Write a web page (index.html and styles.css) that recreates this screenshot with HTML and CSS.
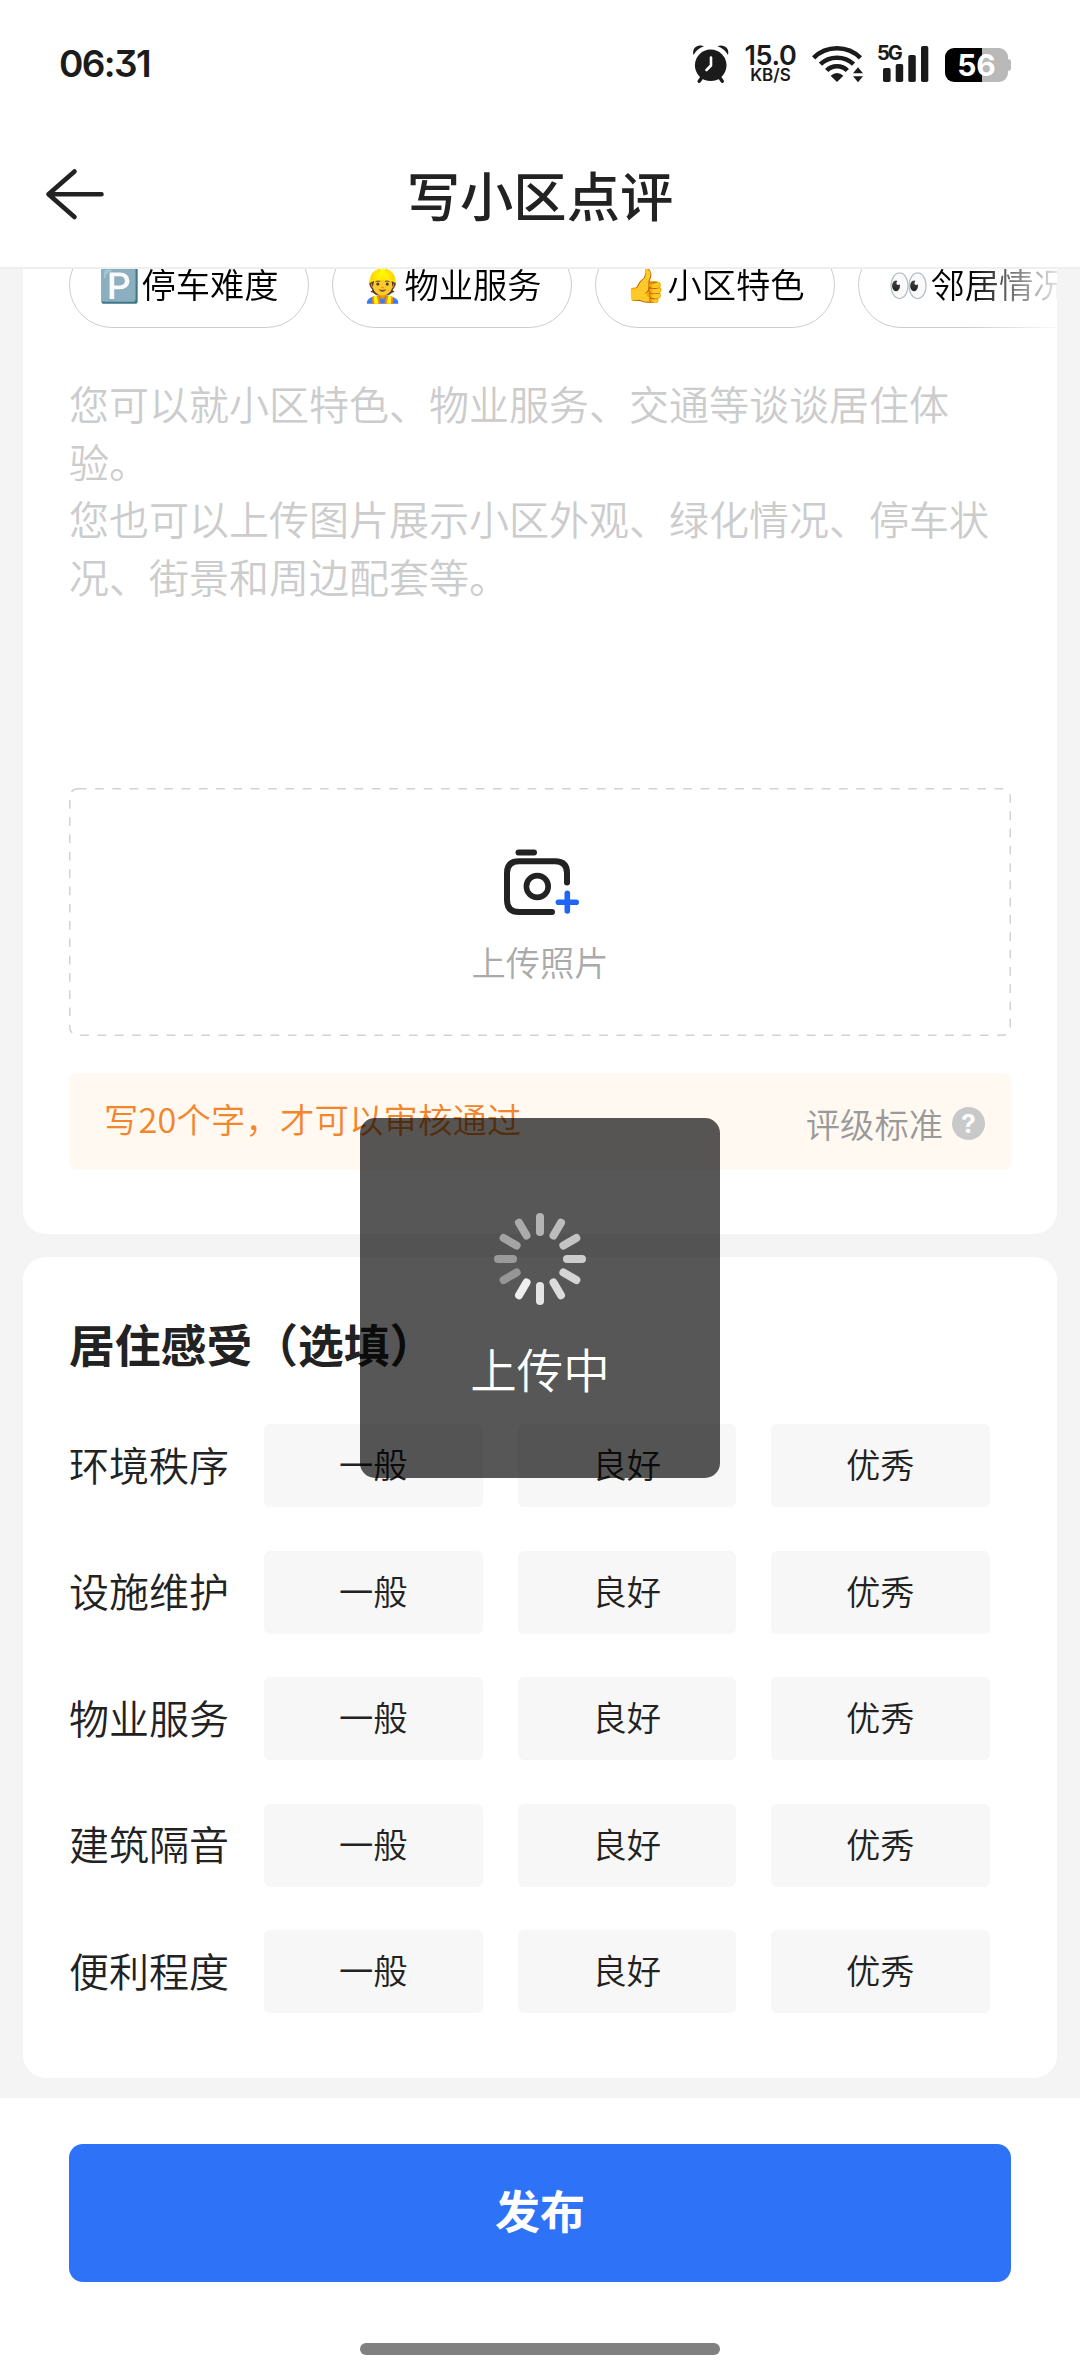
FILE: index.html
```html
<!DOCTYPE html>
<html lang="zh-CN">
<head>
<meta charset="utf-8">
<title>写小区点评</title>
<link rel="stylesheet" href="styles.css">
</head>
<body>
<div class="screen">
  <header class="header">
    <div class="status">
      <span class="clock">06:31</span>
      <div class="status-icons">
        <svg class="alarm" width="38" height="40" viewBox="0 0 38 40">
          <g fill="#1b1b1b"><circle cx="18.7" cy="21.3" r="15.8"/>
          <path d="M1.5 11C-.5 4 6 0 12 2.200Q4.500 5 1.500 11Z"/><path d="M36 11C38 4 31.500 0 25.500 2.200Q33 5 36 11Z"/></g>
          <path d="M9.500 34l-2.300 3.300M28 34l2.300 3.300" stroke="#1b1b1b" stroke-width="3.400" stroke-linecap="round"/>
          <path d="M19 13.500v8l-4.500 4.500" fill="none" stroke="#fff" stroke-width="2.600" stroke-linecap="round" stroke-linejoin="round"/>
        </svg>
        <div class="speed"><b>15.0</b><span>KB/S</span></div>
        <svg class="wifi" width="52" height="40" viewBox="0 0 52 40">
          <g fill="none" stroke="#1b1b1b" stroke-width="4.600">
            <path d="M1.600 13.800C14.500 1 35.500 1 48.400 13.800"/>
            <path d="M8.400 20.200C17.500 11.600 32.500 11.600 41.600 20.200"/>
            <path d="M14.700 26.500C20 20.800 30 20.800 35.300 26.500"/>
          </g>
          <path d="M25 38l-6.400-6.200q6.400-5.400 12.800 0z" fill="#1b1b1b"/>
          <path d="M46 23.200l5 6h-10zM46 38.200l5-6h-10z" fill="#1b1b1b"/>
        </svg>
        <div class="signal">
          <span>5G</span>
          <svg width="54" height="40" viewBox="0 0 54 40" fill="#1b1b1b">
            <rect x="6" y="24" width="7.600" height="14" rx="1.800"/><rect x="18.700" y="20" width="7.500" height="18" rx="1.800"/><rect x="31.300" y="11" width="7.500" height="27" rx="1.800"/><rect x="44" y="2" width="7.300" height="36" rx="1.800"/>
          </svg>
        </div>
        <div class="battery"><span>56</span></div>
      </div>
    </div>
    <div class="nav">
      <svg class="back" width="64" height="54" viewBox="0 0 64 54" fill="none" stroke="#222" stroke-width="4.600" stroke-linecap="round" stroke-linejoin="round"><path d="M32.500 4.500L6.500 27.200L32.500 50M6.500 27.200H59.500"/></svg>
      <h1>写小区点评</h1>
    </div>
  </header>

  <main class="content">
    <section class="card review">
      <div class="chips">
        <div class="chip"><i>🅿️</i>停车难度</div>
        <div class="chip"><i>👷</i>物业服务</div>
        <div class="chip"><i>👍</i>小区特色</div>
        <div class="chip"><i>👀</i>邻居情况</div>
      </div>
      <div class="editor">您可以就小区特色、物业服务、交通等谈谈居住体验。<br>您也可以上传图片展示小区外观、绿化情况、停车状况、街景和周边配套等。</div>
      <div class="upload">
        <svg class="dashes" width="942" height="248"><rect x=".75" y=".75" width="940.500" height="246.500" rx="8" fill="none" stroke="#d2d2d2" stroke-width="1.500" stroke-dasharray="8.700 8.600"/></svg>
        <svg width="76" height="66" viewBox="0 0 76 66" fill="none" stroke="#222" stroke-width="6" stroke-linecap="round">
          <path d="M14.500 3.500H30M63 33.500V24Q63 12.200 51 12.200H15Q3 12.200 3 24V51Q3 63 15 63H48"/>
          <circle cx="33.300" cy="37.500" r="10.900" stroke-width="5.600"/>
          <path d="M63.300 44.300V62M54.400 53.200H72.200" stroke="#1f66f5" stroke-width="5.600"/>
        </svg>
        <span>上传照片</span>
      </div>
      <div class="notice">
        <span class="tip">写20个字，才可以审核通过</span>
        <span class="standard">评级标准</span>
        <span class="help">?</span>
      </div>
    </section>

    <section class="card feeling">
      <h2>居住感受（选填）</h2>
      <div class="row"><label>环境秩序</label><button>一般</button><button>良好</button><button>优秀</button></div>
      <div class="row"><label>设施维护</label><button>一般</button><button>良好</button><button>优秀</button></div>
      <div class="row"><label>物业服务</label><button>一般</button><button>良好</button><button>优秀</button></div>
      <div class="row"><label>建筑隔音</label><button>一般</button><button>良好</button><button>优秀</button></div>
      <div class="row"><label>便利程度</label><button>一般</button><button>良好</button><button>优秀</button></div>
    </section>
  </main>

  <footer class="footer">
    <button class="publish">发布</button>
    <div class="home"></div>
  </footer>

  <div class="toast">
    <svg width="96" height="96" viewBox="-48 -48 96 96" stroke-width="8" stroke-linecap="round">
      <path d="M0-42V-27" stroke="#b4b4b4"/>
      <path d="M0-42V-27" stroke="#bcbcbc" transform="rotate(30)"/>
      <path d="M0-42V-27" stroke="#c4c4c4" transform="rotate(60)"/>
      <path d="M0-42V-27" stroke="#cdcdcd" transform="rotate(90)"/>
      <path d="M0-42V-27" stroke="#d5d5d5" transform="rotate(120)"/>
      <path d="M0-42V-27" stroke="#dcdcdc" transform="rotate(150)"/>
      <path d="M0-42V-27" stroke="#e4e4e4" transform="rotate(180)"/>
      <path d="M0-42V-27" stroke="#eeeeee" transform="rotate(210)"/>
      <path d="M0-42V-27" stroke="#969696" transform="rotate(240)"/>
      <path d="M0-42V-27" stroke="#9a9a9a" transform="rotate(270)"/>
      <path d="M0-42V-27" stroke="#a3a3a3" transform="rotate(300)"/>
      <path d="M0-42V-27" stroke="#ababab" transform="rotate(330)"/>
    </svg>
    <span>上传中</span>
  </div>
</div>
</body>
</html>
```
FILE: styles.css
```css
* { box-sizing: border-box; margin: 0; padding: 0; }
body {
  background: #f4f4f4;
  color: #222;
  font-family: "Noto Sans CJK SC", "Noto Color Emoji", sans-serif;
  font-weight: 350;
}
button { border: 0; font: inherit; color: inherit; }
svg { display: block; flex: none; }

.screen {
  position: relative;
  display: flex;
  flex-direction: column;
  width: 1080px;
  height: 2376px;
  overflow: hidden;
}

/* header */
.header { flex: none; height: 269px; background: #fff; border-bottom: 2px solid #efefef; }
.status {
  display: flex;
  align-items: flex-start;
  justify-content: space-between;
  height: 124px;
  padding: 44px 69px 0 59px;
  color: #1b1b1b;
  font-family: Inter, sans-serif;
}
.clock { font-size: 37px; line-height: 40px; font-weight: 620; font-feature-settings: "cv09"; letter-spacing: -1.6px; }
.status-icons { display: flex; }
.speed { display: flex; flex-direction: column; align-items: center; width: 57px; margin: 0 13px 0 12px; }
.speed b { font-size: 27px; line-height: 24px; font-weight: 620; letter-spacing: -0.4px; }
.speed span { font-size: 17px; line-height: 14px; font-weight: 600; }
.signal { position: relative; margin: 0 14px 0 13px; }
.signal span { position: absolute; left: 0; top: -1px; font-size: 20px; line-height: 20px; font-weight: 700; letter-spacing: -2px; }
.battery {
  position: relative;
  width: 63px;
  height: 34px;
  margin: 4px 3px 0 0;
  border-radius: 9px;
  background: linear-gradient(90deg, #000 37px, #b9b9b9 37px);
  color: #fff;
  font-size: 30px;
  line-height: 35px;
  font-weight: 650;
  text-align: center;
}
.battery::after { content: ""; position: absolute; left: 63px; top: 11px; width: 3px; height: 12px; border-radius: 0 3px 3px 0; background: #b9b9b9; }
.nav { display: grid; grid-template-columns: 130px 1fr 130px; align-items: center; height: 139px; }
.back { margin-left: 42px; }
.nav h1 { font-size: 53.3px; line-height: 80px; font-weight: 500; text-align: center; }

/* scrolled page */
.content { flex: 1; min-height: 0; overflow: hidden; padding: 0 23px; }
.card { background: #fff; border-radius: 23px; padding: 0 46px; }
.review { height: 1025px; margin: -60px 0 23px; padding-top: 33px; }
.chips {
  display: flex;
  gap: 23px;
  margin: 0 -46px;
  padding-left: 46px;
  overflow: hidden;
  -webkit-mask-image: linear-gradient(90deg, #000 945px, rgba(0, 0, 0, .1) 1034px);
  mask-image: linear-gradient(90deg, #000 945px, rgba(0, 0, 0, .1) 1034px);
}
.chip {
  display: flex;
  flex: none;
  align-items: center;
  justify-content: center;
  width: 240px;
  height: 86px;
  padding-bottom: 4px;
  border: 1px solid #ccc;
  border-radius: 43px;
  color: #000;
  font-size: 34.3px;
  line-height: 50px;
}
.chip i { width: 42px; font-style: normal; font-size: 33px; }
.editor { height: 413px; margin-top: 47px; color: #ccc; font-size: 40px; line-height: 57.7px; }
.upload { position: relative; display: flex; flex-direction: column; align-items: center; height: 248px; padding-top: 61px; }
.upload .dashes { position: absolute; inset: 0; }
.upload > svg:not(.dashes) { margin-left: 4px; }
.upload span { margin-top: 21px; color: #aaa; font-size: 34.3px; line-height: 50px; }
.notice {
  display: flex;
  height: 97px;
  margin-top: 37px;
  padding: 0 26px 0 35px;
  border-radius: 8px;
  background: #fff9f2;
  font-size: 34.3px;
  line-height: 50px;
}
.tip { padding-top: 20px; color: #f3852b; letter-spacing: 0.2px; }
.standard { margin-left: auto; padding-top: 25px; color: #999; }
.help {
  width: 33px;
  height: 33px;
  margin: 34px 0 0 9px;
  border-radius: 50%;
  background: #c9c9c9;
  color: #fff;
  font: 700 26px/33px Inter, sans-serif;
  text-align: center;
}

/* ratings */
.feeling { height: 821px; padding-top: 51px; }
.feeling h2 { font-size: 45.8px; line-height: 70px; font-weight: 700; margin-bottom: 46px; }
.row { display: flex; align-items: center; gap: 35px; height: 83px; margin-bottom: 43.6px; }
.row label { width: 160px; font-size: 40px; line-height: 60px; padding-bottom: 4px; }
.row button { width: 218.5px; height: 83px; border-radius: 6px; background: #f7f7f7; font-size: 34.3px; line-height: 50px; padding-bottom: 5px; }

/* footer */
.footer { flex: none; display: flex; flex-direction: column; align-items: center; height: 278px; padding-top: 46px; background: #fff; }
.publish { width: 942px; height: 138px; border-radius: 14px; background: #2e72f7; color: #fff; font-size: 45px; line-height: 60px; font-weight: 700; padding-bottom: 7px; }
.home { width: 360px; height: 12px; margin-top: 61px; border-radius: 6px; background: #808080; }

/* loading toast */
.toast {
  position: absolute;
  left: 360px;
  top: 1118px;
  display: flex;
  flex-direction: column;
  align-items: center;
  width: 360px;
  height: 360px;
  padding-top: 93px;
  border-radius: 15px;
  background: rgba(0, 0, 0, .66);
  color: #fff;
}
.toast span { margin-top: 26px; font-size: 46.5px; line-height: 70px; }
```
